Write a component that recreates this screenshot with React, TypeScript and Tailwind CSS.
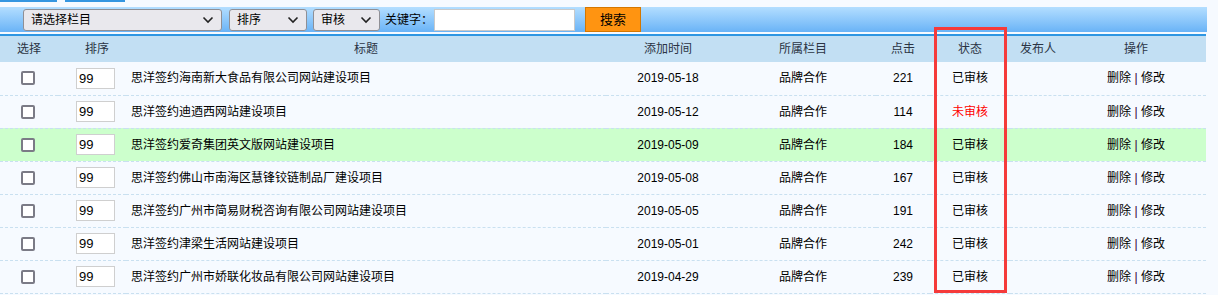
import React from "react";

type Row = { title: string; date: string; hits: number; ok: boolean; hl?: boolean };

const rows: Row[] = [
  { title: "思洋签约海南新大食品有限公司网站建设项目", date: "2019-05-18", hits: 221, ok: true },
  { title: "思洋签约迪迺西网站建设项目", date: "2019-05-12", hits: 114, ok: false },
  { title: "思洋签约爱奇集团英文版网站建设项目", date: "2019-05-09", hits: 184, ok: true, hl: true },
  { title: "思洋签约佛山市南海区慧锋铰链制品厂建设项目", date: "2019-05-08", hits: 167, ok: true },
  { title: "思洋签约广州市简易财税咨询有限公司网站建设项目", date: "2019-05-05", hits: 191, ok: true },
  { title: "思洋签约津梁生活网站建设项目", date: "2019-05-01", hits: 242, ok: true },
  { title: "思洋签约广州市娇联化妆品有限公司网站建设项目", date: "2019-04-29", hits: 239, ok: true },
];

function Chevron() {
  return (
    <svg width="12" height="8" viewBox="0 0 12 8" className="shrink-0">
      <path d="M1.5 1.5 L6 6 L10.5 1.5" fill="none" stroke="#222" strokeWidth="1.6" />
    </svg>
  );
}

function FakeSelect({ label, width }: { label: string; width: string }) {
  return (
    <div
      className={`${width} h-[22px] flex items-center justify-between pl-[7px] pr-[7px] bg-[#e9e8ed] border border-[#8f8f95] rounded-[3px] text-[12px] text-black`}
    >
      <span>{label}</span>
      <Chevron />
    </div>
  );
}

export default function App() {
  return (
    <div
      className="relative w-[1218px] h-[295px] overflow-hidden bg-[#f6faff] text-[12px] text-black"
      style={{ fontFamily: '"Liberation Sans", "Noto Sans CJK SC", sans-serif' }}
    >
      <div className="flex h-[7px] gap-[8px]">
        <div className="w-[57px] h-[2px] bg-[#3596e0]" />
        <div className="w-[60px] h-[2px] bg-[#3596e0]" />
      </div>

      <div className="w-[1207px] h-[25px] flex items-center pl-[23px] bg-gradient-to-b from-[#b3deff] to-[#69b3f6]">
        <FakeSelect label="请选择栏目" width="w-[199px]" />
        <div className="w-[7px]" />
        <FakeSelect label="排序" width="w-[78px]" />
        <div className="w-[6px]" />
        <FakeSelect label="审核" width="w-[67px]" />
        <span className="ml-[5px] w-[49px]">关键字：</span>
        <div className="w-[141px] h-[22px] bg-white border border-[#c9c9c9]" />
        <div className="ml-[10px] w-[56px] h-[25px] flex items-center justify-center bg-[#ff9411] border border-[#d47700] text-[13px]">
          搜索
        </div>
      </div>

      <div className="h-[2px]" />
      <div className="w-[1206px] h-[2px] bg-[#2e96e2]" />

      <table className="table-fixed border-collapse w-[1206px]">
        <colgroup>
          <col className="w-[58px]" />
          <col className="w-[68px]" />
          <col className="w-[480px]" />
          <col className="w-[124px]" />
          <col className="w-[146px]" />
          <col className="w-[54px]" />
          <col className="w-[80px]" />
          <col className="w-[56px]" />
          <col className="w-[140px]" />
        </colgroup>
        <thead>
          <tr className="h-[26px] bg-[#c2dff3] text-[#2b3444]">
            <th className="font-normal text-center">选择</th>
            <th className="font-normal text-center pl-[10px]">排序</th>
            <th className="font-normal text-center">标题</th>
            <th className="font-normal text-center">添加时间</th>
            <th className="font-normal text-center">所属栏目</th>
            <th className="font-normal text-center">点击</th>
            <th className="font-normal text-center">状态</th>
            <th className="font-normal text-center">发布人</th>
            <th className="font-normal text-center">操作</th>
          </tr>
        </thead>
        <tbody>
          {rows.map((r, i) => (
            <tr
              key={i}
              className={`h-[33px] border-b border-dashed border-[#c9e0f0] ${r.hl ? "bg-[#ccffcc]" : ""}`}
            >
              <td className="pl-[21px]">
                <span className="block w-[14px] h-[14px] border-2 border-[#7b7b86] rounded-[2px] bg-white" />
              </td>
              <td className="pl-[18px]">
                <div className="w-[39px] h-[21px] bg-white border border-[#cfcfcf] flex items-center pl-[2px] text-[13px]">
                  99
                </div>
              </td>
              <td className="pl-[5px] whitespace-nowrap">{r.title}</td>
              <td className="text-center">{r.date}</td>
              <td className="text-center">品牌合作</td>
              <td className="text-center">{r.hits}</td>
              <td className={`text-center ${r.ok ? "" : "text-[#ff0000]"}`}>{r.ok ? "已审核" : "未审核"}</td>
              <td className="text-center" />
              <td className="text-center">
                删除 <span className="text-[#330033]">|</span> 修改
              </td>
            </tr>
          ))}
        </tbody>
      </table>

      <div className="absolute left-[934px] top-[27px] w-[73px] h-[266px] border-[3px] border-[#f53a3a]" />
    </div>
  );
}
